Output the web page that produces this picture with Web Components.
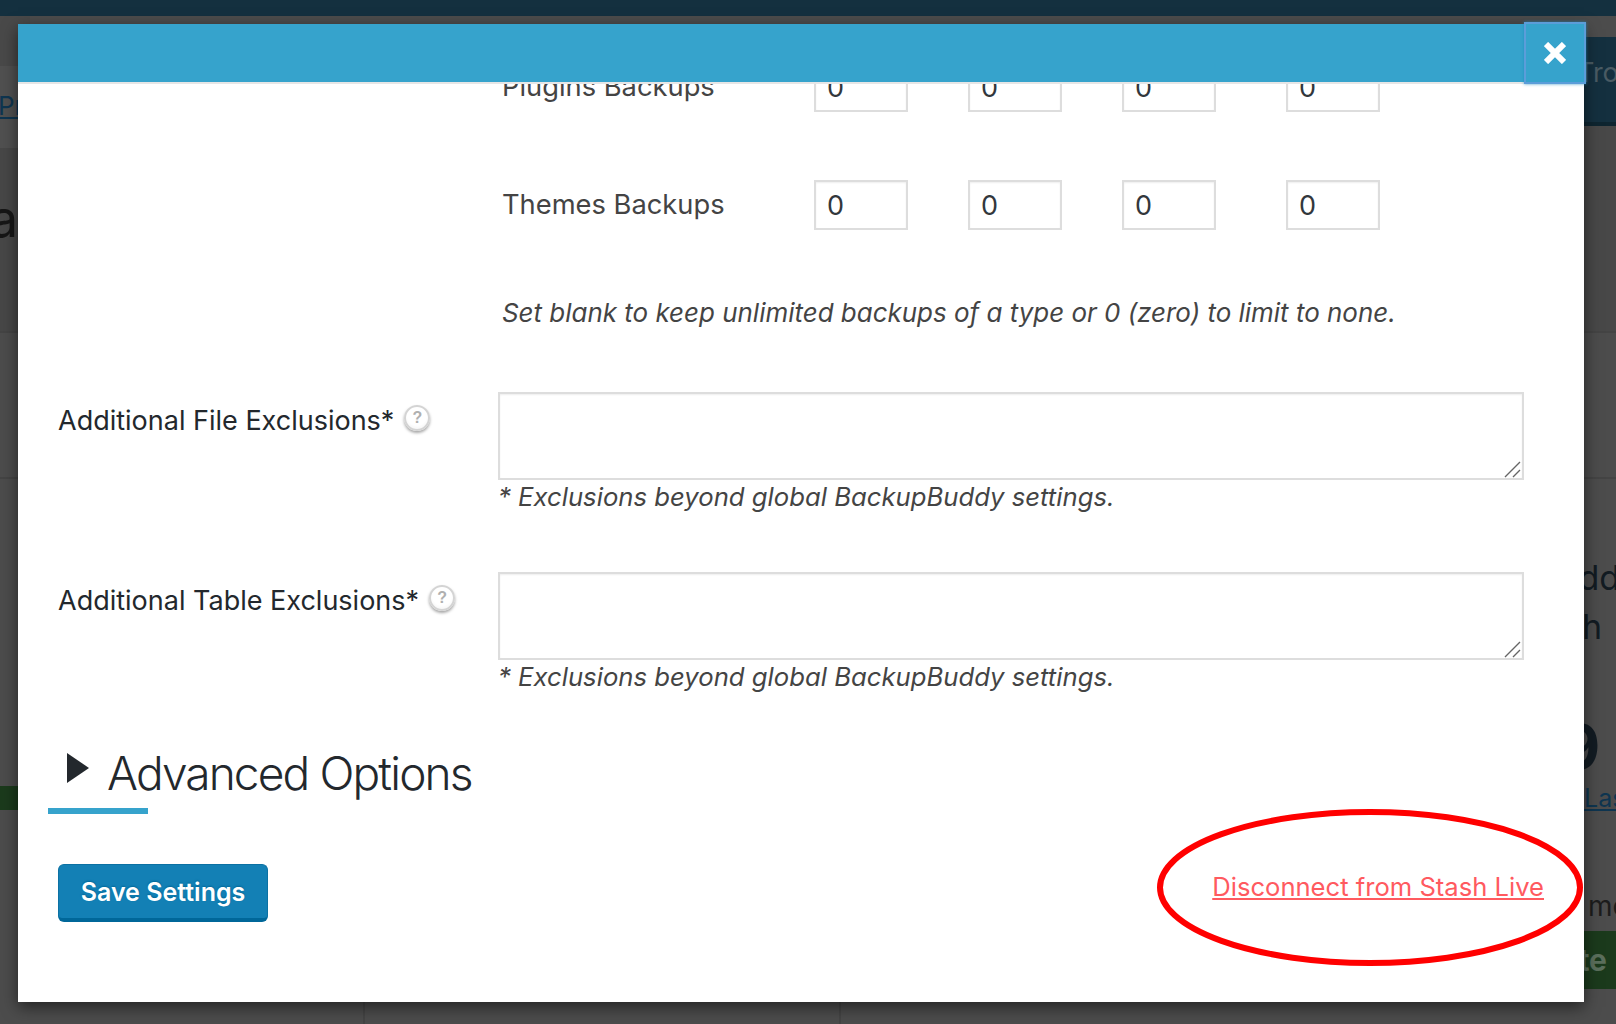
<!DOCTYPE html>
<html lang="en">
<head>
<meta charset="utf-8">
<title>Stash Live settings</title>
<style>
    html, body { margin: 0; height: 100%; overflow: hidden; background: #4c4c4c; }
    body { font-family: Inter, "Liberation Sans", sans-serif; position: relative; }
</style>
</head>
<body>
<page-backdrop></page-backdrop>
<settings-modal>
    <retain-table>
        <retain-row label="Plugins Backups"></retain-row>
        <retain-row label="Themes Backups"></retain-row>
    </retain-table>
    <p style="margin:66px 0 0 444px;font:italic 400 25.95px/34px Inter,sans-serif;color:#444">Set blank to keep unlimited backups of a type or 0 (zero) to limit to none.</p>
    <exclusion-row label="Additional File Exclusions*" style="margin-top:62px"></exclusion-row>
    <exclusion-row label="Additional Table Exclusions*" style="margin-top:58px"></exclusion-row>
    <advanced-heading>Advanced Options</advanced-heading>
    <modal-footer>
        <save-button>Save Settings</save-button>
        <a slot="link" href="#">Disconnect from Stash Live</a>
    </modal-footer>
</settings-modal>

<script>
class PageBackdrop extends HTMLElement {
    constructor() {
        super();
        this.attachShadow({mode: "open"}).innerHTML = `
            <style>
                :host { display: flex; flex-direction: column; height: 1024px; overflow: hidden; }
                .adminbar { height: 16px; background: #14303f; flex: none; }
                .page { flex: 1; display: grid; grid-template-columns: 30px 1fr 32px; min-height: 0; }
                .col { display: flex; flex-direction: column; overflow: hidden; white-space: nowrap; min-width: 0; }
                .right { font-size: 34px; color: #121b22; }
                .blk { flex: none; box-sizing: border-box; border-bottom: 2px solid #444; }
                a { color: #0e3550; font-size: 26px; }
                .mid { justify-content: flex-end; }
                .foot { height: 22px; display: flex; }
                .foot i { width: 2px; background: #444; margin-left: 333px; }
                .foot i + i { margin-left: 474px; }
            </style>
            <div class="adminbar"></div>
            <div class="page">
                <div class="col left">
                    <div class="blk" style="height:50px;background:#494949;border:0"></div>
                    <div class="blk" style="height:82px;background:#505050;border:0;padding-top:24px"><a href="#" style="margin-left:-2px">Pr</a></div>
                    <div class="blk" style="height:185px;background:#474747;padding-top:41px;font-size:52px;color:#161616;line-height:60px"><span style="margin-left:-11px">a</span></div>
                    <div class="blk" style="height:146px;background:#4c4c4c"></div>
                    <div class="blk" style="height:307px;background:#4c4c4c;border:0"></div>
                    <div class="blk" style="height:24px;background:#1b3a1c;border:0"></div>
                </div>
                <div class="col mid">
                    <div class="foot"><i></i><i></i></div>
                </div>
                <div class="col right">
                    <div class="blk" style="height:21px;background:#4c4c4c;border:0"></div>
                    <div class="blk" style="height:89px;background:#14303f;border-bottom:4px solid #0e2530;padding-top:16px;color:#4a5b63;font-size:27px;line-height:40px"><span style="margin-left:-7px">Tro</span></div>
                    <div class="blk" style="height:207px;background:#484848;border-bottom-color:#444"></div>
                    <div class="blk" style="height:146px;background:#4c4c4c"></div>
                    <div class="blk" style="height:454px;background:#4c4c4c;border:0;display:flex;flex-direction:column">
                        <span style="margin:80px 0 0 -29px;line-height:38px">Add</span>
                        <span style="margin:11px 0 0 -13px;line-height:38px">th</span>
                        <span style="margin:77px 0 0 -24px;font-size:62px;font-weight:700;line-height:48px">9 r</span>
                        <a href="#" style="margin:12px 0 0 0;line-height:30px;font-size:25px">Las</a>
                        <span style="margin:75px 0 0 4px;line-height:36px;color:#1c1c1c;font-size:28px">mo</span>
                        <span style="height:61px;background:#1b3a1c;margin-top:7px;color:#5b6f5c;font-weight:700;font-size:30px;line-height:58px"><span style="margin-left:-23px">ate</span></span>
                    </div>
                </div>
            </div>`;
    }
}

class SettingsModal extends HTMLElement {
    constructor() {
        super();
        this.attachShadow({mode: "open"}).innerHTML = `
            <style>
                :host { position: absolute; left: 18px; top: 24px; width: 1566px; height: 978px; background: #fff;
                        display: flex; flex-direction: column; box-shadow: 0 5px 15px rgba(0,0,0,.55); }
                header { height: 58px; flex: none; background: #36a3cc; box-shadow: 0 2px 0 #e6e6e6; position: relative; z-index: 1; }
                button { position: absolute; left: 1506px; top: -2px; width: 62px; height: 62px; box-sizing: border-box; padding: 0;
                         background: #36a3cc; border: 2px solid #5b9dd9; box-shadow: 0 0 3px rgba(30,140,190,.8);
                         display: flex; align-items: center; justify-content: center; }
                .body { flex: 1; overflow: hidden; padding: 0 40px; position: relative; }
                .scroll { margin-top: -20px; }
                svg.mark { position: absolute; left: 1139px; top: 785px; z-index: 2; overflow: visible; pointer-events: none; }
            </style>
            <header>
                <button aria-label="Close">
                    <svg width="22" height="22" viewBox="0 0 22 22"><path d="M2 2 20 20M20 2 2 20" stroke="#fff" stroke-width="6" fill="none"/></svg>
                </button>
            </header>
            <div class="body"><div class="scroll"><slot></slot></div></div>
            <svg class="mark" width="426" height="157" viewBox="0 0 426 157"><ellipse cx="213" cy="78.5" rx="210" ry="75.5" fill="none" stroke="#f00" stroke-width="6"/></svg>`;
    }
}

class RetainTable extends HTMLElement {
    constructor() {
        super();
        this.attachShadow({mode: "open"}).innerHTML = `
            <style>:host { display: flex; flex-direction: column; gap: 68px; margin-left: 444px; }</style>
            <slot></slot>`;
    }
}

class RetainRow extends HTMLElement {
    connectedCallback() {
        if (this.shadowRoot) return;
        this.attachShadow({mode: "open"}).innerHTML = `
            <style>
                :host { display: grid; grid-template-columns: 312px 154px 154px 164px 94px; align-items: center; height: 50px; }
                span { font-size: 27.3px; color: #444; position: relative; top: -1px; }
                div { box-sizing: border-box; width: 94px; height: 50px; border: 2px solid #ddd; padding: 0 11px; font-size: 27px; line-height: 48px; color: #32373c;
                      box-shadow: inset 0 1px 2px rgba(0,0,0,.07); }
            </style>
            <span>${this.getAttribute("label")}</span>
            <div>0</div><div>0</div><div>0</div><div>0</div>`;
    }
}

class ExclusionRow extends HTMLElement {
    connectedCallback() {
        if (this.shadowRoot) return;
        this.attachShadow({mode: "open"}).innerHTML = `
            <style>
                :host { display: grid; grid-template-columns: 440px 1026px; color: #23282d; }
                .label { font-size: 27px; line-height: 32px; padding-top: 13px; display: flex; align-items: flex-start; gap: 10px; }
                .help { width: 26px; height: 26px; box-sizing: border-box; border-radius: 50%; background: radial-gradient(circle at 50% 40%, #fff 55%, #eee); border: 2px solid #d4d4d4;
                        box-shadow: 0 2px 3px rgba(0,0,0,.35); color: #b0b0b0; font: 700 16px/22px "Liberation Sans", sans-serif; text-align: center; }
                .field { position: relative; }
                textarea { display: block; box-sizing: border-box; width: 1026px; height: 88px; margin: 0; border: 2px solid #ddd; border-radius: 0; outline: 0;
                           box-shadow: inset 0 1px 2px rgba(0,0,0,.07); background: #fff; resize: none; }
                svg { position: absolute; right: 2px; top: 68px; }
                em { display: block; font-size: 25.7px; line-height: 34px; color: #444; }
            </style>
            <div class="label"><span>${this.getAttribute("label")}</span><span class="help">?</span></div>
            <div class="field">
                <textarea></textarea>
                <svg width="18" height="18" viewBox="0 0 18 18"><path d="M1 17 16 2M9 17 16 10" stroke="#666" stroke-width="1.4" fill="none"/></svg>
                <em>* Exclusions beyond global BackupBuddy settings.</em>
            </div>`;
    }
}

class AdvancedHeading extends HTMLElement {
    constructor() {
        super();
        this.attachShadow({mode: "open"}).innerHTML = `
            <style>
                :host { display: block; margin: 49px 0 0 -10px; width: max-content; color: #23282d; }
                .head { display: flex; align-items: flex-start; font-size: 46px; font-weight: 300; line-height: 60px; letter-spacing: -1.85px; }
                svg { margin: 10px 18px 0 19px; }
                .rule { width: 100px; height: 6px; background: #36a3cc; margin-top: 5px; }
            </style>
            <div class="head">
                <svg width="22" height="30" viewBox="0 0 22 30"><path d="M0 0 22 15 0 30Z" fill="#23282d"/></svg>
                <slot></slot>
            </div>
            <div class="rule"></div>`;
    }
}

class ModalFooter extends HTMLElement {
    constructor() {
        super();
        this.attachShadow({mode: "open"}).innerHTML = `
            <style>
                :host { display: flex; justify-content: space-between; align-items: flex-start; margin-top: 50px; }
                ::slotted(a) { color: #ff5a5f; font-size: 25.6px; line-height: 32px; margin-top: 7px; }
            </style>
            <slot></slot><slot name="link"></slot>`;
    }
}

class SaveButton extends HTMLElement {
    constructor() {
        super();
        this.attachShadow({mode: "open"}).innerHTML = `
            <style>
                :host { display: flex; align-items: center; justify-content: center; box-sizing: border-box; width: 210px; height: 58px; padding-top: 1px;
                        background: #1380b5; border: 1px solid #0c71a3; border-bottom: 4px solid #006799; border-radius: 6px;
                        color: #fff; font-size: 25px; font-weight: 600; text-shadow: 0 -1px 2px #006799; }
            </style>
            <slot></slot>`;
    }
}

customElements.define("page-backdrop", PageBackdrop);
customElements.define("settings-modal", SettingsModal);
customElements.define("retain-table", RetainTable);
customElements.define("retain-row", RetainRow);
customElements.define("exclusion-row", ExclusionRow);
customElements.define("advanced-heading", AdvancedHeading);
customElements.define("modal-footer", ModalFooter);
customElements.define("save-button", SaveButton);
</script>
</body>
</html>
